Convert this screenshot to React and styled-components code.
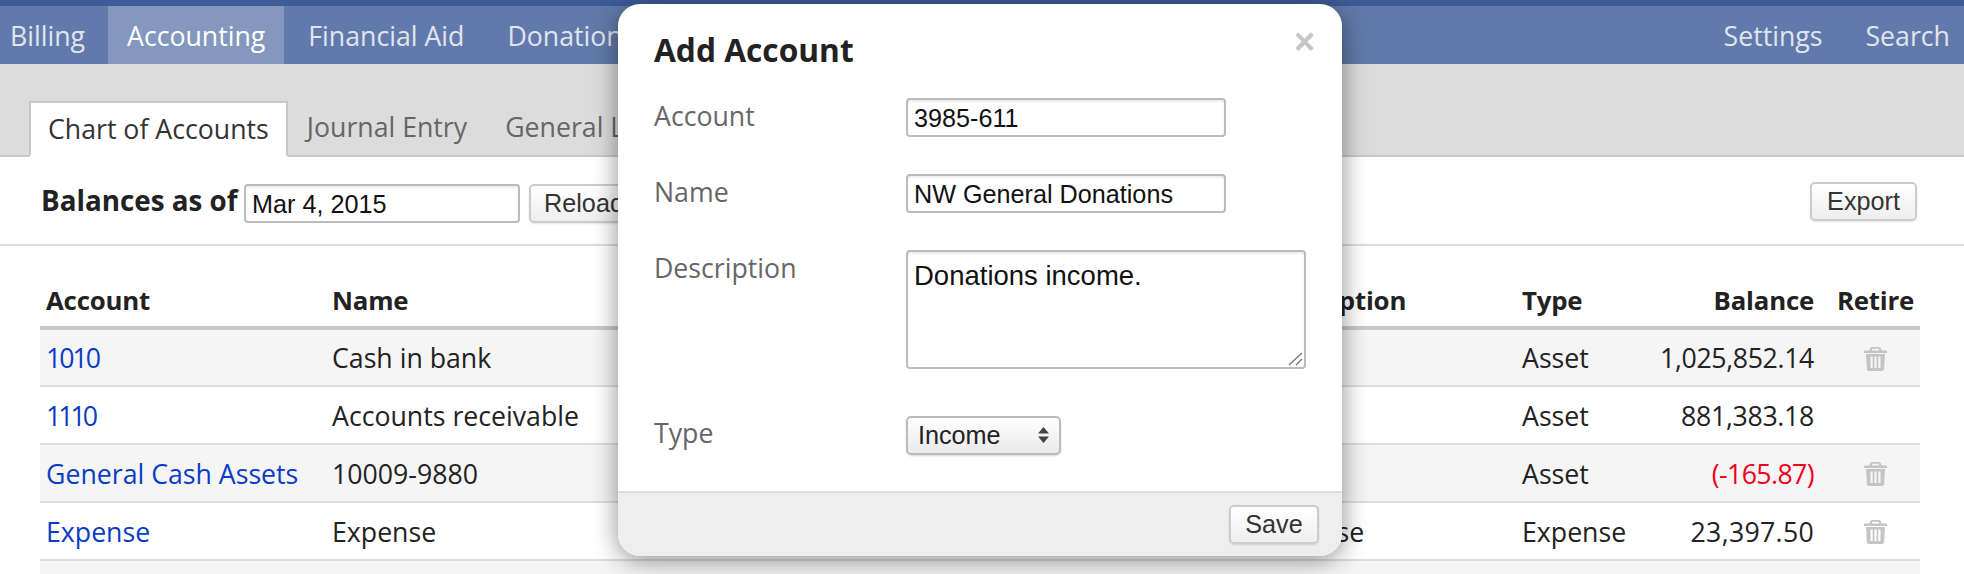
import React from "react";
import styled, { createGlobalStyle } from "styled-components";

const Global = createGlobalStyle`
  html, body { margin: 0; padding: 0; background: #fff; }
  body { height: 574px; overflow: hidden; font-family: "Open Sans", Lato, sans-serif; font-size: 26.7px; color: #222; }
  * { box-sizing: border-box; }
`;

const Page = styled.div`
  position: relative;
  width: 1964px;
  height: 574px;
  overflow: hidden;
`;

const TopNav = styled.nav`
  display: flex;
  height: 64px;
  background: #627aab;
  border-top: 6px solid #3d5c98;
  padding-right: 10px;
`;

const NavItem = styled.a`
  display: flex;
  align-items: center;
  padding: 0 19px;
  margin-right: 5px;
  color: ${(p) => (p.$active ? "#fff" : "#e0e5ef")};
  background: ${(p) => (p.$active ? "#8497bf" : "transparent")};
  &:first-child { padding-left: 10px; margin-right: 6px; width: 102px; }
  &:last-child { margin-right: 0; padding-right: 4px; }
`;

const NavSpacer = styled.div`
  flex: 1;
`;

const TabBar = styled.div`
  display: flex;
  align-items: flex-end;
  height: 93px;
  padding-left: 29px;
  background: #dcdcdc;
  border-bottom: 2px solid #c8c8c8;
`;

const Tab = styled.a`
  display: flex;
  align-items: center;
  height: ${(p) => (p.$active ? "56px" : "54px")};
  padding: ${(p) => (p.$active ? "0 17px 2px" : "0 19px 4px")};
  margin-bottom: ${(p) => (p.$active ? "-2px" : "0")};
  background: ${(p) => (p.$active ? "#fff" : "transparent")};
  border: ${(p) => (p.$active ? "2px solid #c8c8c8" : "none")};
  border-bottom: ${(p) => (p.$active ? "2px solid #fff" : "none")};
  color: ${(p) => (p.$active ? "#333" : "#666")};
`;

const Toolbar = styled.div`
  display: flex;
  align-items: flex-start;
  height: 89px;
  padding: 27px 47px 0 41px;
  border-bottom: 2px solid #ddd;
`;

const BalanceLabel = styled.span`
  font-size: 27.8px;
  font-weight: 700;
  line-height: 32px;
  width: 203px;
  white-space: nowrap;
`;

const TextInput = styled.input`
  font: 25.2px "Liberation Sans", Arial, sans-serif;
  width: ${(p) => p.$w || "320px"};
  height: 39px;
  padding: 2px 6px 0;
  border: 2px solid #bbb;
  border-radius: 4px;
  color: #111;
  background: #fff;
  box-shadow: inset 0 2px 2px #eee;
  outline: none;
`;

const Button = styled.button`
  font: 25.2px "Liberation Sans", Arial, sans-serif;
  height: 39px;
  width: ${(p) => p.$w};
  margin: ${(p) => p.$m || "0"};
  padding: 0;
  border: 2px solid #ccc;
  border-radius: 5px;
  color: #333;
  background: linear-gradient(#fff, #eee);
  box-shadow: 0 1px 2px rgba(0, 0, 0, 0.12);
`;

const ToolbarGap = styled.div`
  flex: 1;
`;

const Table = styled.table`
  margin: 26px 0 0 40px;
  width: 1880px;
  border-collapse: collapse;
  table-layout: fixed;
`;

const Th = styled.th`
  height: 56px;
  padding: 1px ${(p) => (p.$pr ? p.$pr : "6px")} 0 6px;
  font-size: 25.8px;
  letter-spacing: -0.2px;
  font-weight: 700;
  text-align: ${(p) => p.$align || "left"};
  border-bottom: 4px solid #c8c8c8;
  color: #222;
`;

const Row = styled.tr`
  height: 58px;
  background: ${(p) => (p.$alt ? "#f5f5f5" : "#fff")};
  border-bottom: 2px solid #ddd;
`;

const Td = styled.td`
  padding: 0 ${(p) => (p.$pr ? p.$pr : "6px")} 0 6px;
  text-align: ${(p) => p.$align || "left"};
  color: ${(p) => (p.$neg ? "#f0001c" : "#222")};
  letter-spacing: ${(p) => p.$ls || 0}px;
  white-space: nowrap;
`;

const AccountLink = styled.a`
  color: #0b3cc5;
  letter-spacing: ${(p) => p.$ls || 0}px;
`;

const TrashIcon = styled.svg`
  display: block;
  margin: 2px auto 0;
  width: 23px;
  height: 24px;
  fill: #c4c4c4;
`;

const Trash = () => (
  <TrashIcon viewBox="0 0 23 24">
    <path
      fillRule="evenodd"
      d="M8 0h7c1 0 1.800.8 2 1.600L17.600 3.400H22c.6 0 1 .4 1 1V6H0V4.400c0-.6.4-1 1-1h4.400L6 1.600C6.200.8 7 0 8 0zm.2 1.800-.5 1.600h7.600l-.5-1.600H8.200zM2 7h19l-.9 15c-.1 1.100-1 2-2.100 2H5c-1.100 0-2-.9-2.100-2L2 7zm4.500 2.500v11.500h2.200V9.500H6.500zm3.900 0v11.500h2.200V9.500h-2.200zm3.900 0v11.500h2.200V9.500h-2.200z"
    />
  </TrashIcon>
);

const Modal = styled.div`
  position: absolute;
  left: 618px;
  top: 4px;
  width: 724px;
  height: 552px;
  display: flex;
  flex-direction: column;
  background: #fff;
  border-radius: 22px;
  box-shadow: 0 4px 26px rgba(0, 0, 0, 0.45);
  overflow: hidden;
`;

const ModalBody = styled.div`
  flex: 1;
  padding: 0 36px;
`;

const CloseX = styled.span`
  position: absolute;
  top: 17px;
  right: 27px;
  font: 700 36px "Liberation Sans", Arial, sans-serif;
  color: #c6c6c6;
`;

const ModalTitle = styled.h2`
  margin: 0;
  height: 94px;
  padding-top: 28px;
  font-size: 31.7px;
  line-height: 36px;
  font-weight: 700;
  color: #222;
`;

const FormRow = styled.div`
  display: flex;
  align-items: flex-start;
  margin-bottom: ${(p) => p.$mb || "37px"};
`;

const FieldLabel = styled.label`
  flex: 0 0 252px;
  line-height: 36px;
  color: #666;
`;

const TextAreaWrap = styled.div`
  position: relative;
  width: 400px;
  height: 119px;
`;

const TextArea = styled.textarea`
  display: block;
  font: 27.5px "Liberation Sans", Arial, sans-serif;
  width: 100%;
  height: 100%;
  padding: 8px 6px;
  border: 2px solid #bbb;
  border-radius: 4px;
  color: #111;
  box-shadow: inset 0 2px 2px #eee;
  outline: none;
  resize: none;
`;

const Grip = styled.svg`
  position: absolute;
  right: 3px;
  bottom: 3px;
  width: 15px;
  height: 14px;
  stroke: #777;
  stroke-width: 1.4;
  pointer-events: none;
`;

const SelectWrap = styled.div`
  position: relative;
  width: 155px;
  height: 39px;
`;

const Select = styled.select`
  appearance: none;
  width: 100%;
  height: 100%;
  padding: 0 0 0 10px;
  font: 25.2px "Liberation Sans", Arial, sans-serif;
  color: #222;
  border: 2px solid #bbb;
  border-radius: 5px;
  background: linear-gradient(#fff, #e9e9e9);
  box-shadow: 0 1px 2px rgba(0, 0, 0, 0.15);
`;

const SelectArrows = styled.svg`
  position: absolute;
  right: 11px;
  top: 12px;
  width: 13px;
  height: 16px;
  fill: #444;
  pointer-events: none;
`;

const ModalFooter = styled.div`
  display: flex;
  justify-content: flex-end;
  height: 66px;
  padding: 12px 23px 0 0;
  background: #eee;
  border-top: 2px solid #ddd;
`;

export default function App() {
  const rows = [
    { a: "1010", als: -2, n: "Cash in bank", t: "Asset", b: "1,025,852.14", bls: -0.35, trash: true, alt: true },
    { a: "1110", als: -3, n: "Accounts receivable", t: "Asset", b: "881,383.18", bls: -0.3 },
    { a: "General Cash Assets", n: "10009-9880", t: "Asset", b: "(-165.87)", bls: -0.6, neg: true, trash: true, alt: true },
    { a: "Expense", n: "Expense", d: "Expense", t: "Expense", b: "23,397.50", bls: 0.3, trash: true },
  ];
  return (
    <Page>
      <Global />
      <TopNav>
        <NavItem>Billing</NavItem>
        <NavItem $active>Accounting</NavItem>
        <NavItem>Financial Aid</NavItem>
        <NavItem>Donations</NavItem>
        <NavSpacer />
        <NavItem>Settings</NavItem>
        <NavItem>Search</NavItem>
      </TopNav>
      <TabBar>
        <Tab $active>Chart of Accounts</Tab>
        <Tab>Journal Entry</Tab>
        <Tab>General Ledger</Tab>
      </TabBar>
      <Toolbar>
        <BalanceLabel>Balances as of</BalanceLabel>
        <TextInput $w="276px" defaultValue="Mar 4, 2015" />
        <Button $w="110px" $m="0 0 0 9px">Reload</Button>
        <ToolbarGap />
        <Button $w="107px" $m="-2px 0 0 0">Export</Button>
      </Toolbar>
      <Table>
        <colgroup>
          <col style={{ width: 286 }} />
          <col style={{ width: 928 }} />
          <col style={{ width: 262 }} />
          <col style={{ width: 124 }} />
          <col style={{ width: 191 }} />
          <col style={{ width: 89 }} />
        </colgroup>
        <thead>
          <tr>
            <Th>Account</Th>
            <Th>Name</Th>
            <Th>Description</Th>
            <Th>Type</Th>
            <Th $align="right" $pr="17px">Balance</Th>
            <Th $align="center" $pr="6px">Retire</Th>
          </tr>
        </thead>
        <tbody>
          {rows.map((r) => (
            <Row key={r.a} $alt={r.alt}>
              <Td><AccountLink $ls={r.als}>{r.a}</AccountLink></Td>
              <Td>{r.n}</Td>
              <Td>{r.d}</Td>
              <Td>{r.t}</Td>
              <Td $align="right" $pr="17px" $neg={r.neg} $ls={r.bls}>{r.b}</Td>
              <Td>{r.trash && <Trash />}</Td>
            </Row>
          ))}
          <Row $alt><Td colSpan={6} /></Row>
        </tbody>
      </Table>
      <Modal>
        <CloseX>×</CloseX>
        <ModalBody>
          <ModalTitle>Add Account</ModalTitle>
          <FormRow>
            <FieldLabel>Account</FieldLabel>
            <TextInput defaultValue="3985-611" />
          </FormRow>
          <FormRow>
            <FieldLabel>Name</FieldLabel>
            <TextInput defaultValue="NW General Donations" />
          </FormRow>
          <FormRow $mb="46px">
            <FieldLabel>Description</FieldLabel>
            <TextAreaWrap>
              <TextArea defaultValue="Donations income." />
              <Grip viewBox="0 0 15 14">
                <path d="M1 13 14 1M8 13l6-6" />
              </Grip>
            </TextAreaWrap>
          </FormRow>
          <FormRow>
            <FieldLabel>Type</FieldLabel>
            <SelectWrap>
              <Select defaultValue="Income">
                <option>Income</option>
                <option>Expense</option>
                <option>Asset</option>
              </Select>
              <SelectArrows viewBox="0 0 13 16">
                <path d="M6.500 0 12 6.500H1zM1 9.500h11L6.500 16z" />
              </SelectArrows>
            </SelectWrap>
          </FormRow>
        </ModalBody>
        <ModalFooter>
          <Button $w="90px">Save</Button>
        </ModalFooter>
      </Modal>
    </Page>
  );
}
